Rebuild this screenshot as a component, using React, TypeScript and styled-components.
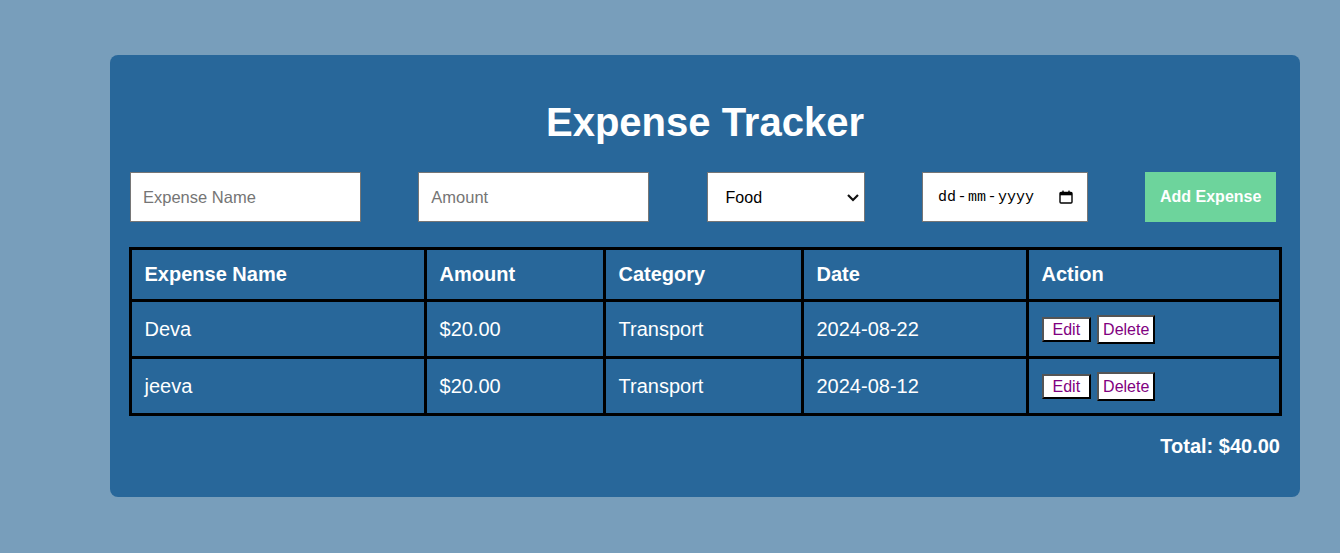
import React from 'react';
import styled, { createGlobalStyle } from 'styled-components';

const GlobalStyle = createGlobalStyle`
  html, body {
    margin: 0;
    padding: 0;
    background-color: #789ebb;
    font-family: "Liberation Sans", Arial, sans-serif;
  }
`;

const Page = styled.div({
  minHeight: "553px",
  paddingTop: "55px",
  boxSizing: "border-box",
});

const Card = styled.div({
  marginLeft: "110px",
  width: "1190px",
  boxSizing: "border-box",
  padding: "20px",
  backgroundColor: "#28679a",
  borderRadius: "8px",
  color: "white",
});

const Title = styled.h1({
  margin: "24px 0 27px",
  fontSize: "40px",
  lineHeight: "46px",
  fontWeight: "bold",
  textAlign: "center",
});

const FormRow = styled.div({
  display: "flex",
  alignItems: "center",
  gap: "57.3px",
  height: "50px",
});

const TextInput = styled.input<{ $width: number }>`
  box-sizing: border-box;
  width: ${p => p.$width}px;
  height: 50px;
  padding: 0 12px;
  border: 1px solid #767676;
  background: white;
  font-family: "Liberation Sans", Arial, sans-serif;
  font-size: 16.5px;
  color: #000;
  outline: none;
  &::placeholder {
    color: #757575;
  }
`;

const SelectWrap = styled.div({
  position: "relative",
  width: "158px",
  height: "50px",
});

const Select = styled.select({
  appearance: "none",
  boxSizing: "border-box",
  width: "100%",
  height: "100%",
  padding: "0 14px 0 18px",
  border: "1px solid #767676",
  borderRadius: 0,
  background: "white",
  fontFamily: "\"Liberation Sans\", Arial, sans-serif",
  fontSize: "16px",
  color: "#000",
  outline: "none",
});

const Chevron = styled.svg({
  position: "absolute",
  right: "5px",
  top: "21px",
  pointerEvents: "none",
});

const DateField = styled.div({
  boxSizing: "border-box",
  width: "166px",
  height: "50px",
  padding: "0 14px 0 15px",
  border: "1px solid #767676",
  background: "white",
  display: "flex",
  alignItems: "center",
  justifyContent: "space-between",
  color: "#000",
});

const DateText = styled.span({
  fontFamily: "\"Liberation Mono\", \"Courier New\", monospace",
  fontSize: "15px",
});

const Sep = styled.span({
  padding: "0 1.5px",
});

const AddButton = styled.button({
  boxSizing: "border-box",
  width: "131px",
  height: "50px",
  border: "none",
  backgroundColor: "#6dd49c",
  color: "white",
  fontFamily: "\"Liberation Sans\", Arial, sans-serif",
  fontSize: "16px",
  fontWeight: "bold",
  cursor: "pointer",
  padding: 0,
});

const Table = styled.table({
  width: "100%",
  margin: "25px 0 0 -1.5px",
  borderCollapse: "collapse",
  tableLayout: "fixed",
  border: "3px solid #000",
});

const Th = styled.th({
  border: "3px solid #000",
  padding: "13px 13px",
  textAlign: "left",
  fontSize: "20px",
  lineHeight: "23px",
  fontWeight: "bold",
});

const Td = styled.td({
  border: "3px solid #000",
  padding: "12px 13px",
  fontSize: "20px",
  lineHeight: "23px",
  height: "30px",
});

const Actions = styled.div({
  display: "flex",
  alignItems: "center",
  gap: "6px",
  height: "30px",
});

const ActionButton = styled.button<{ $danger?: boolean }>`
  background: white;
  color: #800080;
  font-family: "Liberation Sans", Arial, sans-serif;
  font-size: 16px;
  line-height: 17px;
  padding: ${p => (p.$danger ? "4px 4px" : "2px 9px")};
  border-style: solid;
  border-width: 2px;
  border-color: #555 #000 #000 #555;
  cursor: pointer;
`;

const Total = styled.h3({
  margin: "19px 0 19px",
  fontSize: "20px",
  fontWeight: "bold",
  textAlign: "right",
});

const expenses = [
  { name: "Deva", amount: 20, category: "Transport", date: "2024-08-22" },
  { name: "jeeva", amount: 20, category: "Transport", date: "2024-08-12" },
];

const CalendarIcon = () => (
  <svg width="14" height="14" viewBox="0 0 14 14">
    <rect x="1" y="2.5" width="12" height="10.5" rx="1" fill="none" stroke="#000" strokeWidth="1.4" />
    <rect x="1" y="2.5" width="12" height="2.8" fill="#000" />
    <rect x="3.3" y="0.6" width="1.4" height="2.5" fill="#000" />
    <rect x="9.3" y="0.6" width="1.4" height="2.5" fill="#000" />
  </svg>
);

const App = () => {
  const total = expenses.reduce((s, e) => s + e.amount, 0);
  return (
    <>
      <GlobalStyle />
      <Page>
        <Card>
          <Title>Expense Tracker</Title>
          <FormRow>
            <TextInput $width={231} placeholder="Expense Name" />
            <TextInput $width={231} placeholder="Amount" />
            <SelectWrap>
              <Select defaultValue="Food">
                <option>Food</option>
                <option>Transport</option>
                <option>Entertainment</option>
                <option>Other</option>
              </Select>
              <Chevron width="14" height="9" viewBox="0 0 14 9">
                <path d="M2 2l5 5 5-5" fill="none" stroke="#111" strokeWidth="2.2" />
              </Chevron>
            </SelectWrap>
            <DateField>
              <DateText>
                dd<Sep>-</Sep>mm<Sep>-</Sep>yyyy
              </DateText>
              <CalendarIcon />
            </DateField>
            <AddButton>Add Expense</AddButton>
          </FormRow>

          <Table>
            <colgroup>
              <col style={{ width: "295px" }} />
              <col style={{ width: "179px" }} />
              <col style={{ width: "198px" }} />
              <col style={{ width: "225px" }} />
              <col style={{ width: "253px" }} />
            </colgroup>
            <thead>
              <tr>
                <Th>Expense Name</Th>
                <Th>Amount</Th>
                <Th>Category</Th>
                <Th>Date</Th>
                <Th>Action</Th>
              </tr>
            </thead>
            <tbody>
              {expenses.map(e => (
                <tr key={e.name}>
                  <Td>{e.name}</Td>
                  <Td>${e.amount.toFixed(2)}</Td>
                  <Td>{e.category}</Td>
                  <Td>{e.date}</Td>
                  <Td>
                    <Actions>
                      <ActionButton>Edit</ActionButton>
                      <ActionButton $danger>Delete</ActionButton>
                    </Actions>
                  </Td>
                </tr>
              ))}
            </tbody>
          </Table>

          <Total>Total: ${total.toFixed(2)}</Total>
        </Card>
      </Page>
    </>
  );
};

export default App;
